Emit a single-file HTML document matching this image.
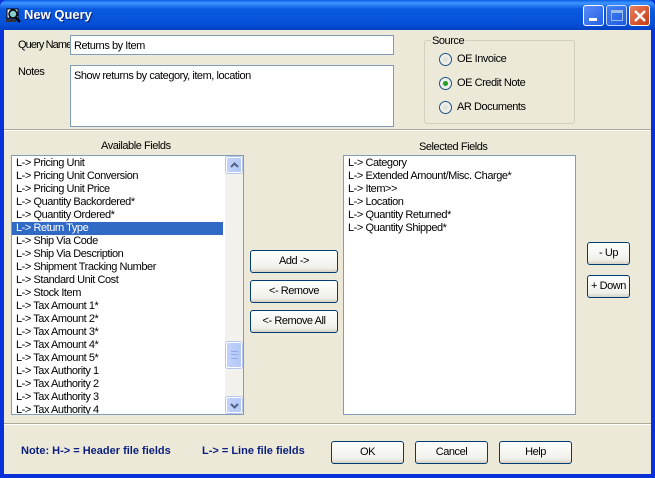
<!DOCTYPE html>
<html><head><style>
*{margin:0;padding:0;box-sizing:border-box}
body{width:655px;height:478px;overflow:hidden;font-family:"Liberation Sans",sans-serif;font-size:11px;letter-spacing:-0.45px;color:#000;background:#0831d9;position:relative}
.abs{position:absolute}
#title{left:0;top:0;width:655px;height:30px;background:linear-gradient(#0a5fe6 0%,#3d95ff 10%,#0a5ae0 30%,#0650d8 80%,#0340c0 100%);border-radius:7px 7px 0 0}
#title .t{left:24px;top:7px;color:#fff;font-weight:bold;font-size:13px;letter-spacing:0;text-shadow:1px 1px #0a1e74}
#body{left:4px;top:30px;width:647px;height:444px;background:#ece9d8}
.tb{width:21px;height:21px;top:5px;border:1px solid #fff;border-radius:3px;background:linear-gradient(135deg,#5b8cf7,#2360e6)}
.inp{background:#fff;border:1px solid #7f9db9}
.btn{border:1px solid #003c74;border-radius:3px;background:linear-gradient(#fff,#f0f0ea 80%,#d6d0c5);text-align:center;line-height:21px}
.list div{height:13px;line-height:13px;padding-left:4px;white-space:nowrap}
.sep{height:2px;border-top:1px solid #aca899;border-bottom:1px solid #fff;left:0;width:647px}
.radio{width:13px;height:13px;border-radius:50%;border:1px solid #1c5180;background:radial-gradient(#dcdcd4,#fff)}
.sb{background:linear-gradient(90deg,#c1d3fb,#b4c8f6);border:1px solid #fff;border-radius:2px;outline:1px solid #b5c7f0}
</style></head><body>
<div id="title" class="abs">
<svg class="abs" style="left:5px;top:6px" width="17" height="17" viewBox="0 0 17 17"><rect x="2" y="3" width="11" height="9" fill="#fff" stroke="#000"/><circle cx="8" cy="8" r="4" fill="#8cc" stroke="#000" stroke-width="1.5"/><path d="M10 11l5 5" stroke="#000" stroke-width="2.5"/><rect x="1" y="13" width="10" height="3" fill="#333"/></svg>
<div class="t abs">New Query</div>
<div class="tb abs" style="left:583px"><div class="abs" style="left:5px;top:12px;width:8px;height:3px;background:#fff"></div></div>
<div class="tb abs" style="left:606px;opacity:.75"><div class="abs" style="left:4px;top:4px;width:12px;height:11px;border:1px solid #cde;border-top-width:3px"></div></div>
<div class="tb abs" style="left:629px;background:linear-gradient(135deg,#e88060,#c83a10)"><svg class="abs" style="left:4px;top:4px" width="12" height="12"><path d="M1 1L11 11M11 1L1 11" stroke="#fff" stroke-width="2.4"/></svg></div>
</div>
<div id="body" class="abs">
<div class="abs" style="left:14px;top:9px;letter-spacing:-0.9px">Query Name</div>
<div class="abs inp" style="left:66px;top:5px;width:324px;height:20px;padding:4px 3px">Returns by Item</div>
<div class="abs" style="left:14px;top:36px">Notes</div>
<div class="abs inp" style="left:66px;top:35px;width:324px;height:62px;padding:4px 3px">Show returns by category, item, location</div>
<div class="abs" style="left:420px;top:10px;width:151px;height:84px;border:1px solid #d0d0bf;border-radius:3px"></div>
<div class="abs" style="left:427px;top:5px;background:#ece9d8;padding:0 1px">Source</div>
<div class="abs radio" style="left:435px;top:23px"></div><div class="abs" style="left:453px;top:23px">OE Invoice</div>
<div class="abs radio" style="left:435px;top:47px"><div class="abs" style="left:3px;top:3px;width:5px;height:5px;border-radius:50%;background:#21a121"></div></div><div class="abs" style="left:453px;top:47px">OE Credit Note</div>
<div class="abs radio" style="left:435px;top:71px"></div><div class="abs" style="left:453px;top:71px">AR Documents</div>
<div class="abs sep" style="top:99px"></div>
<div class="abs" style="left:97px;top:110px">Available Fields</div>
<div class="abs" style="left:415px;top:111px">Selected Fields</div>
<div class="abs inp list" style="left:7px;top:125px;width:233px;height:260px;overflow:hidden;padding-top:1px">
<div>L-&gt; Pricing Unit</div><div>L-&gt; Pricing Unit Conversion</div><div>L-&gt; Pricing Unit Price</div><div>L-&gt; Quantity Backordered*</div><div>L-&gt; Quantity Ordered*</div><div style="background:#316ac5;color:#fff;width:211px">L-&gt; Return Type</div><div>L-&gt; Ship Via Code</div><div>L-&gt; Ship Via Description</div><div>L-&gt; Shipment Tracking Number</div><div>L-&gt; Standard Unit Cost</div><div>L-&gt; Stock Item</div><div>L-&gt; Tax Amount 1*</div><div>L-&gt; Tax Amount 2*</div><div>L-&gt; Tax Amount 3*</div><div>L-&gt; Tax Amount 4*</div><div>L-&gt; Tax Amount 5*</div><div>L-&gt; Tax Authority 1</div><div>L-&gt; Tax Authority 2</div><div>L-&gt; Tax Authority 3</div><div>L-&gt; Tax Authority 4</div>
<div class="abs" style="left:213px;top:0;width:18px;height:258px;background:#f3f1ec"></div>
<div class="abs sb" style="left:214px;top:1px;width:16px;height:16px"><svg class="abs" style="left:3px;top:4px" width="9" height="6"><path d="M1 5L4.5 1.5L8 5" fill="none" stroke="#4d6185" stroke-width="2"/></svg></div>
<div class="abs sb" style="left:214px;top:186px;width:16px;height:26px"><div class="abs" style="left:4px;top:8px;width:7px;height:8px;border-top:1px solid #8faaea;border-bottom:1px solid #8faaea"></div><div class="abs" style="left:4px;top:11px;width:7px;height:2px;border-top:1px solid #8faaea"></div></div>
<div class="abs sb" style="left:214px;top:241px;width:16px;height:16px"><svg class="abs" style="left:3px;top:5px" width="9" height="6"><path d="M1 1L4.5 4.5L8 1" fill="none" stroke="#4d6185" stroke-width="2"/></svg></div>
</div>
<div class="abs inp list" style="left:339px;top:125px;width:233px;height:260px;padding-top:1px">
<div>L-&gt; Category</div><div>L-&gt; Extended Amount/Misc. Charge*</div><div>L-&gt; Item&gt;&gt;</div><div>L-&gt; Location</div><div>L-&gt; Quantity Returned*</div><div>L-&gt; Quantity Shipped*</div>
</div>
<div class="abs btn" style="left:246px;top:220px;width:88px;height:23px">Add -&gt;</div>
<div class="abs btn" style="left:246px;top:250px;width:88px;height:23px">&lt;- Remove</div>
<div class="abs btn" style="left:246px;top:280px;width:88px;height:23px">&lt;- Remove All</div>
<div class="abs btn" style="left:583px;top:212px;width:43px;height:23px">- Up</div>
<div class="abs btn" style="left:583px;top:245px;width:43px;height:23px">+ Down</div>
<div class="abs sep" style="top:393px"></div>
<div class="abs" style="left:17px;top:415px;color:#0a1e80;font-weight:bold;letter-spacing:0">Note: H-&gt; = Header file fields</div>
<div class="abs" style="left:198px;top:415px;color:#0a1e80;font-weight:bold;letter-spacing:0">L-&gt; = Line file fields</div>
<div class="abs btn" style="left:327px;top:411px;width:73px;height:23px">OK</div>
<div class="abs btn" style="left:411px;top:411px;width:73px;height:23px">Cancel</div>
<div class="abs btn" style="left:495px;top:411px;width:73px;height:23px">Help</div>
</div>
</body></html>
